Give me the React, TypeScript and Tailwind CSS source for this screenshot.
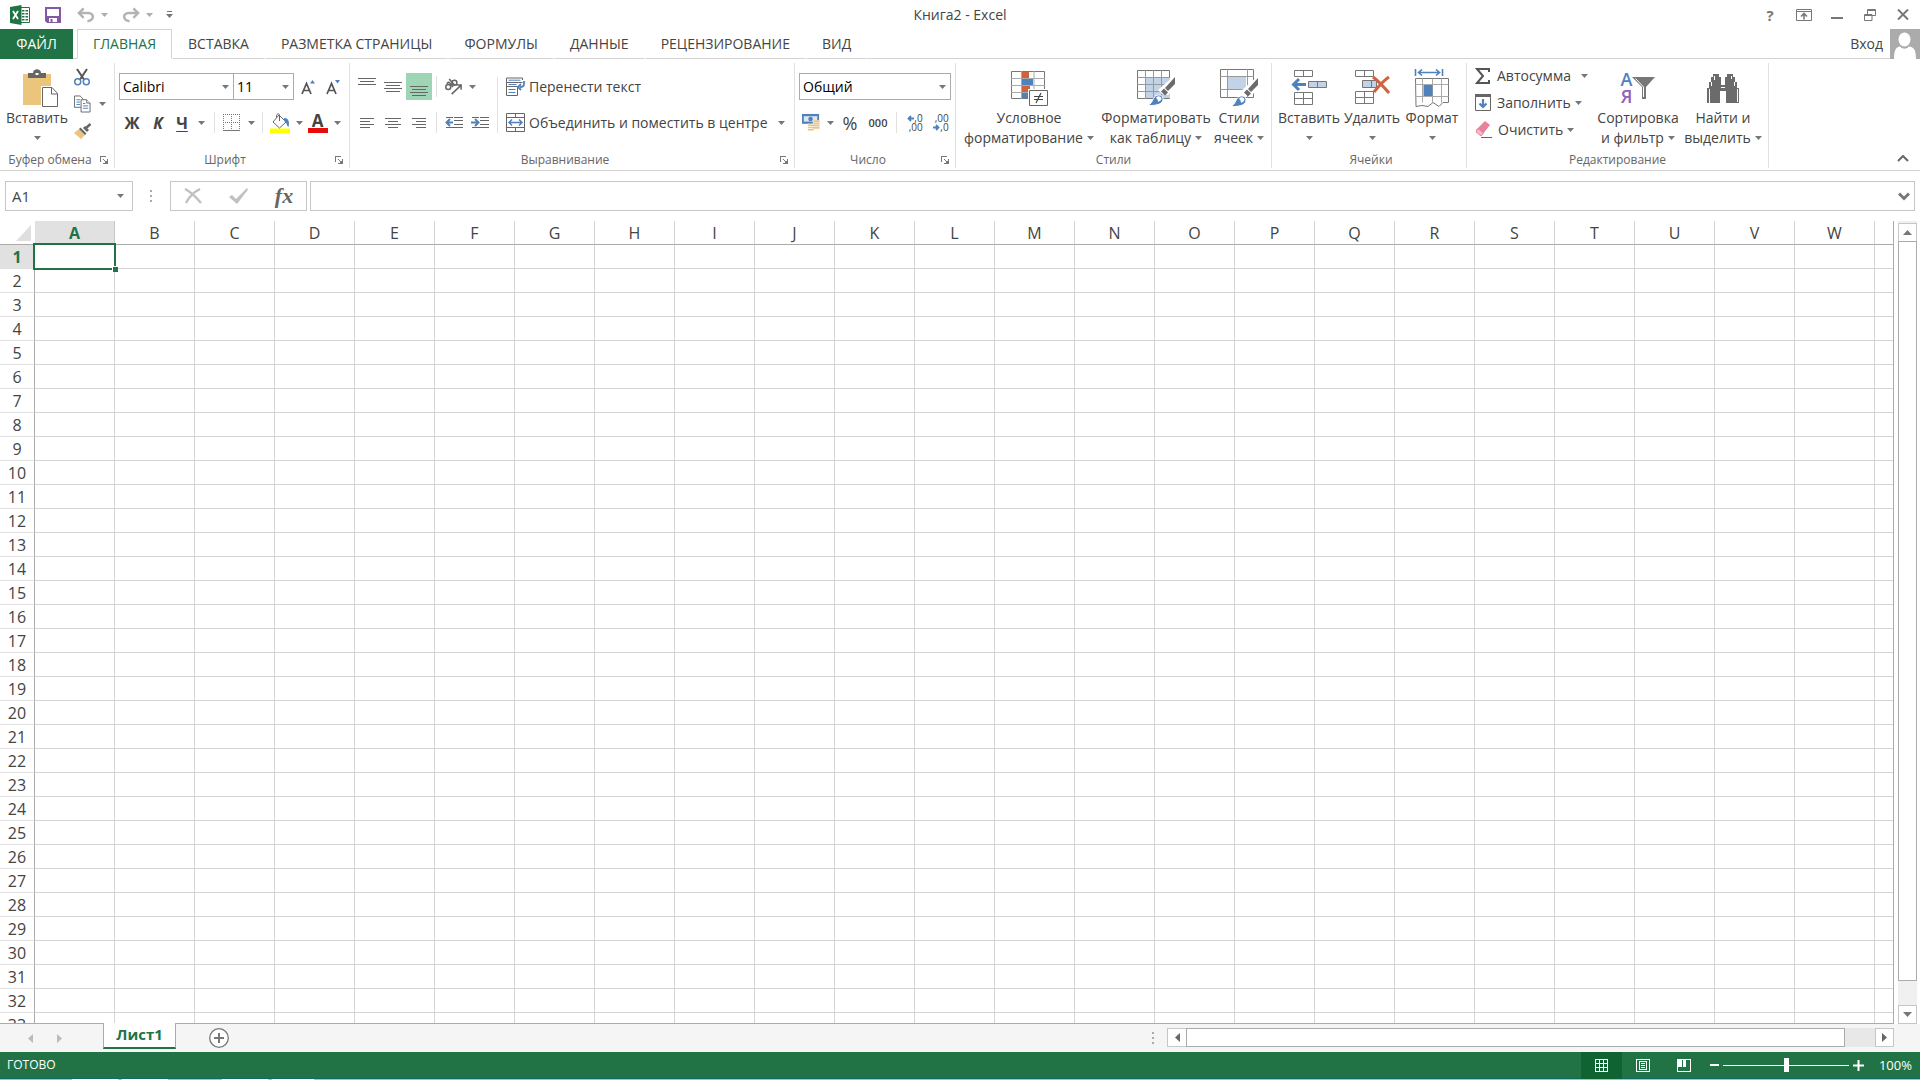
import React, { useState } from 'react'
import type { ReactNode } from 'react'

const TABS = ['ГЛАВНАЯ', 'ВСТАВКА', 'РАЗМЕТКА СТРАНИЦЫ', 'ФОРМУЛЫ', 'ДАННЫЕ', 'РЕЦЕНЗИРОВАНИЕ', 'ВИД']
const COLUMNS = 'ABCDEFGHIJKLMNOPQRSTUVWXYZ'.split('')
const ROWS = Array.from({ length: 40 }, (_, i) => i + 1)

export default function App() {
  const [tab, setTab] = useState('ГЛАВНАЯ')
  const [cell, setCell] = useState('A1')

  return (
    <div className="flex h-screen flex-col overflow-hidden bg-white font-['Open_Sans','Noto_Sans',sans-serif] text-[14px] leading-5 text-[#444]">
      <TitleBar />
      <TabRow active={tab} onSelect={setTab} />
      <Ribbon />
      <FormulaBar cell={cell} />
      <Sheet cell={cell} onSelect={setCell} />
      <SheetTabs />
      <StatusBar />
    </div>
  )
}

// ─── Shared bits ──────────────────────────────────────────────────────────────

function Caret({ className = '' }: { className?: string }) {
  return (
    <svg className={`shrink-0 ${className}`} width="7" height="4" viewBox="0 0 7 4" fill="#777">
      <path d="M0 0h7L3.500 4z" />
    </svg>
  )
}

function Sep({ className = 'h-[21px]' }: { className?: string }) {
  return <span className={`w-px shrink-0 bg-[#e1e1e1] ${className}`} />
}

interface IconButtonProps {
  label: string
  className?: string
  children: ReactNode
}

function IconButton({ label, className = 'w-[26px]', children }: IconButtonProps) {
  return (
    <button aria-label={label} title={label} className={`flex h-[27px] shrink-0 items-center justify-center ${className}`}>
      {children}
    </button>
  )
}

interface BigButtonProps {
  icon: ReactNode
  lines: string[]
  className: string
}

function BigButton({ icon, lines, className }: BigButtonProps) {
  return (
    <button className={`flex shrink-0 flex-col items-center pt-[5px] whitespace-nowrap ${className}`}>
      <span className="flex h-10 items-center">{icon}</span>
      <span>{lines[0]}</span>
      <span className="flex h-5 items-center gap-1">
        {lines[1]}
        <Caret />
      </span>
    </button>
  )
}

interface GroupProps {
  title: string
  className: string
  launcher?: boolean
  children: ReactNode
}

function Group({ title, className, launcher, children }: GroupProps) {
  return (
    <section className={`mt-1 mb-0.5 flex shrink-0 flex-col border-r border-[#e1e1e1] ${className}`}>
      <div className="flex flex-1">{children}</div>
      <div className="flex h-4 items-center text-[12px] leading-4 text-[#666]">
        <h2 className="flex-1 text-center whitespace-nowrap">{title}</h2>
        {launcher && (
          <button aria-label={`Параметры: ${title}`} className="mr-1.5">
            <svg width="8" height="8" viewBox="0 0 8 8" fill="none" stroke="#777" shapeRendering="crispEdges">
              <path d="M.5 6V.5H6" />
              <path d="M3 3l3 3M7.500 3v4.500H3" />
              <path d="M7 4v3H4z" fill="#777" stroke="none" />
            </svg>
          </button>
        )}
      </div>
    </section>
  )
}

function Lines({ rows }: { rows: number[][] }) {
  return (
    <svg width="18" height="18" viewBox="0 0 18 18" stroke="#666" shapeRendering="crispEdges">
      {rows.map(([x1, x2, y]) => (
        <path key={y} d={`M${x1} ${y + 0.5}H${x2}`} />
      ))}
    </svg>
  )
}

// ─── Title bar ────────────────────────────────────────────────────────────────

function TitleBar() {
  return (
    <header className="grid h-[29px] shrink-0 grid-cols-[1fr_auto_1fr] items-center">
      <div className="flex items-center pl-2.5">
        <svg width="20" height="20" viewBox="0 0 20 20">
          <path d="M11 2.500h8.500v15H11" fill="#fff" stroke="#217346" />
          <path d="M12 5h2.500v1.500H12zM15.500 5H18v1.500h-2.500zM12 8h2.500v1.500H12zM15.500 8H18v1.500h-2.500zM12 11h2.500v1.500H12zM15.500 11H18v1.500h-2.500zM12 14h2.500v1.500H12zM15.500 14H18v1.500h-2.500z" fill="#217346" />
          <path d="M0 2l11.500-2v20L0 18z" fill="#217346" />
          <path d="M3 6l5 8M8 6l-5 8" stroke="#fff" strokeWidth="1.800" />
        </svg>
        <IconButton label="Сохранить" className="ml-[15px] w-4">
          <svg width="16" height="16" viewBox="0 0 16 16">
            <path d="M1 1h14v14H2.500L1 13.500z" fill="#fff" stroke="#8558a5" strokeWidth="2" />
            <path d="M1 9h14v6H1z" fill="#8558a5" />
            <path d="M4 11h8v4H4z" fill="#fff" />
            <path d="M5.500 12h2v3h-2z" fill="#8558a5" />
          </svg>
        </IconButton>
        <IconButton label="Отменить" className="ml-4 w-[31px] gap-1.5">
          <svg width="19" height="16" viewBox="0 0 19 16" fill="none" stroke="#b3b3b3" strokeWidth="2.600">
            <path d="M2 6h10c7 0 6 8-1 8.500" />
            <path d="M7 1L2 6l5 5" />
          </svg>
          <Caret className="opacity-60" />
        </IconButton>
        <IconButton label="Вернуть" className="ml-3.5 w-[31px] gap-1.5">
          <svg width="19" height="16" viewBox="0 0 19 16" fill="none" stroke="#b3b3b3" strokeWidth="2.600">
            <path d="M17 6H7C0 6 1 14 8 14.500" />
            <path d="M12 1l5 5-5 5" />
          </svg>
          <Caret className="opacity-60" />
        </IconButton>
        <IconButton label="Настройка панели быстрого доступа" className="ml-3 w-2">
          <svg width="7" height="7" viewBox="0 0 7 7" fill="#777">
            <path d="M1 0h5v1H1zM0 3h7L3.500 7z" />
          </svg>
        </IconButton>
      </div>
      <h1>Книга2 - Excel</h1>
      <div className="flex items-center justify-end pr-[11px] text-[#777]">
        <IconButton label="Справка" className="w-[34px] text-[15px] font-bold">?</IconButton>
        <IconButton label="Параметры отображения ленты" className="w-[33px]">
          <svg width="16" height="12" viewBox="0 0 16 12" fill="none" stroke="#777">
            <path d="M.5.5h15v11H.5zM1 2.500h14" />
            <path d="M8 10.500V5M5 7.500L8 4.500l3 3" strokeWidth="1.600" />
          </svg>
        </IconButton>
        <IconButton label="Свернуть" className="w-[33px]">
          <svg width="12" height="8" viewBox="0 0 12 8" fill="#777">
            <path d="M0 6h12v2H0z" />
          </svg>
        </IconButton>
        <IconButton label="Восстановить" className="w-[33px]">
          <svg width="12" height="12" viewBox="0 0 12 12" fill="none" stroke="#777">
            <path d="M3.500 5V.5h8v6H8M3.500 1.500h8" />
            <path d="M.5 5.500h7.500v6H.5zM.5 6.500H8" />
          </svg>
        </IconButton>
        <IconButton label="Закрыть" className="ml-2.5 w-[13px]">
          <svg width="12" height="11" viewBox="0 0 12 11" stroke="#777" strokeWidth="2">
            <path d="M1 .5l10 10M11 .5l-10 10" />
          </svg>
        </IconButton>
      </div>
    </header>
  )
}

// ─── Tabs ─────────────────────────────────────────────────────────────────────

interface TabRowProps {
  active: string
  onSelect: (tab: string) => void
}

function TabRow({ active, onSelect }: TabRowProps) {
  return (
    <nav className="flex h-[30px] shrink-0">
      <button className="w-[73px] bg-[#217346] text-white">ФАЙЛ</button>
      <span className="w-1 border-b border-[#d4d4d4]" />
      {TABS.map(t => (
        <button
          key={t}
          onClick={() => onSelect(t)}
          className={[
            'border px-[15px] whitespace-nowrap',
            t === active
              ? 'border-[#d4d4d4] border-b-white text-[#217346]'
              : 'border-transparent border-b-[#d4d4d4]',
          ].join(' ')}
        >
          {t}
        </button>
      ))}
      <div className="flex flex-1 items-center justify-end border-b border-[#d4d4d4] pr-[7px]">
        <a href="#login">Вход</a>
      </div>
      <svg width="30" height="30" viewBox="0 0 30 30" className="bg-[#ababab]">
        <ellipse cx="14.500" cy="10.500" rx="6" ry="7" fill="#fff" />
        <path d="M4 30c0-9 2-12 6-12.500 3 3 6 3 9 0 5 .5 7 3.500 7 12.500z" fill="#fff" />
      </svg>
    </nav>
  )
}

// ─── Ribbon ───────────────────────────────────────────────────────────────────

function Ribbon() {
  return (
    <div className="flex h-28 shrink-0 border-b border-[#d4d4d4]">
      <ClipboardGroup />
      <FontGroup />
      <AlignmentGroup />
      <NumberGroup />
      <StylesGroup />
      <CellsGroup />
      <EditingGroup />
      <button aria-label="Свернуть ленту" className="mt-auto mr-[11px] mb-2 ml-auto">
        <svg width="12" height="7" viewBox="0 0 12 7" fill="none" stroke="#666" strokeWidth="2">
          <path d="M1 6l5-5 5 5" />
        </svg>
      </button>
    </div>
  )
}

function ClipboardGroup() {
  return (
    <Group title="Буфер обмена" className="w-[115px]" launcher>
      <BigButton
        className="w-[74px]"
        lines={['Вставить', '']}
        icon={
          <svg className="ml-2" width="36" height="39" viewBox="0 0 36 39">
            <path d="M0 5h28v31H0z" fill="#ecc57d" />
            <path d="M5 4h5c0-5 8-5 8 0h5v5H5z" fill="#666" />
            <path d="M12.500 4h3v2h-3z" fill="#fff" />
            <path d="M18 17h18v22H18z" fill="#fff" />
            <path d="M19.500 18.500h9.500l5.500 6v13h-15z" fill="#fff" stroke="#666" />
            <path d="M28.500 18.500v6.500h6" fill="none" stroke="#666" />
          </svg>
        }
      />
      <div className="flex flex-col">
        <IconButton label="Вырезать" className="w-4">
          <svg width="16" height="18" viewBox="0 0 16 18" fill="none">
            <path d="M3 1l7 10.500M13 1L6 11.500" stroke="#555" strokeWidth="2" />
            <circle cx="3.700" cy="13.700" r="3" stroke="#4f81bd" strokeWidth="1.500" />
            <circle cx="12.300" cy="13.700" r="3" stroke="#4f81bd" strokeWidth="1.500" />
          </svg>
        </IconButton>
        <IconButton label="Копировать" className="w-8 justify-start gap-2">
          <svg width="18" height="18" viewBox="0 0 18 18" fill="#fff" stroke="#666">
            <path d="M.5.5h6l3 3v9h-9z" />
            <path d="M2.500 4.500h4M2.500 7h4M2.500 9.500h4" stroke="#4f81bd" />
            <path d="M7.500 4.500h6l3.500 3.500v9.500H7.500z" />
            <path d="M13.500 4.500V8H17" />
            <path d="M9.500 8.500h2.500M9.500 11h5.500M9.500 13.500h5.500" stroke="#4f81bd" />
          </svg>
          <Caret />
        </IconButton>
        <IconButton label="Формат по образцу" className="w-[18px]">
          <svg width="18" height="16" viewBox="0 0 18 16">
            <path d="M5 6l6 6-4 4-7-6z" fill="#ecc57d" />
            <path d="M6.500 4.500l6 6-1.500 1.500-6-6zM9 5l2-2 4 4-2 2z" fill="#666" />
            <path d="M12 5l4.500-4" stroke="#666" strokeWidth="2.500" />
          </svg>
        </IconButton>
      </div>
    </Group>
  )
}

function FontGroup() {
  return (
    <Group title="Шрифт" className="w-[235px]" launcher>
      <div className="flex flex-col gap-[9px] pt-2.5">
        <div className="flex pl-1">
          <Combo label="Шрифт" className="w-[115px]" options={['Calibri', 'Arial']} />
          <Combo label="Размер шрифта" className="-ml-px w-[61px]" options={['11', '12', '14']} />
          <IconButton label="Увеличить размер шрифта" className="ml-px w-[26px]">
            <SizeGlyph d="M9 4.500h5L11.500 1z" />
          </IconButton>
          <IconButton label="Уменьшить размер шрифта" className="w-6">
            <SizeGlyph d="M9 1h5l-2.500 3.500z" />
          </IconButton>
        </div>
        <div className="flex items-center pl-1">
          <IconButton label="Полужирный"><b className="text-[16px]">Ж</b></IconButton>
          <IconButton label="Курсив"><b className="text-[16px] italic">К</b></IconButton>
          <IconButton label="Подчеркнутый" className="w-[39px] gap-2.5">
            <b className="text-[16px] underline underline-offset-2">Ч</b>
            <Caret />
          </IconButton>
          <Sep className="mx-1 h-[21px]" />
          <IconButton label="Границы" className="w-[39px] gap-2">
            <svg width="17" height="17" viewBox="0 0 17 17" fill="none" stroke="#777" strokeDasharray="1 1" shapeRendering="crispEdges">
              <path d="M0 .5h17M0 8.500h17M.5 0v17M8.500 0v17M16.500 0v17" />
              <path d="M0 16.500h17" strokeDasharray="none" />
            </svg>
            <Caret />
          </IconButton>
          <Sep className="mx-1 h-[21px]" />
          <IconButton label="Цвет заливки" className="w-[38px] gap-1.5">
            <svg width="20" height="20" viewBox="0 0 20 20">
              <path d="M0 15.500h20V20H0z" fill="#ffff00" />
              <path d="M9 2l7 7-6.500 6L3 9z" fill="#fff" stroke="#666" />
              <path d="M9.500 8V2.500c0-3-3.500-2-3 2" fill="none" stroke="#666" />
              <path d="M14 5c4 0 6 3 4.500 9C16.500 13 17 9 14 8z" fill="#4f81bd" />
            </svg>
            <Caret />
          </IconButton>
          <IconButton label="Цвет текста" className="w-[38px] gap-1.5">
            <span className="w-5 border-b-[5px] border-[#e60c0c] text-center text-[17px] leading-[15px] font-bold">А</span>
            <Caret />
          </IconButton>
        </div>
      </div>
    </Group>
  )
}

function SizeGlyph({ d }: { d: string }) {
  return (
    <svg width="14" height="16" viewBox="0 0 14 16">
      <path d="M1 15L5.500 4.500 10 15M2.500 11.500h6" fill="none" stroke="#555" strokeWidth="1.700" />
      <path d={d} fill="#4f81bd" />
    </svg>
  )
}

interface ComboProps {
  label: string
  className: string
  options: string[]
}

function Combo({ label, className, options }: ComboProps) {
  return (
    <label className={`relative flex h-[27px] shrink-0 items-center border border-[#ababab] bg-white ${className}`}>
      <select aria-label={label} className="h-full w-full appearance-none pl-[3px] text-black outline-none">
        {options.map(o => (
          <option key={o}>{o}</option>
        ))}
      </select>
      <Caret className="pointer-events-none absolute right-1" />
    </label>
  )
}

function AlignmentGroup() {
  return (
    <Group title="Выравнивание" className="w-[445px]" launcher>
      <div className="flex flex-col gap-[9px] pt-2.5 pl-1">
        <div className="flex items-center">
          <IconButton label="По верхнему краю">
            <Lines rows={[[0, 18, 0], [2, 16, 3], [0, 18, 6]]} />
          </IconButton>
          <IconButton label="По середине">
            <Lines rows={[[0, 18, 4], [2, 16, 7], [0, 18, 10], [2, 16, 13]]} />
          </IconButton>
          <IconButton label="По нижнему краю" className="w-[26px] bg-[#9fd5b7]">
            <Lines rows={[[0, 18, 8], [2, 16, 11], [0, 18, 14], [2, 16, 17]]} />
          </IconButton>
          <Sep className="ml-1 h-[21px]" />
          <IconButton label="Ориентация" className="ml-[7px] w-8 gap-1.5">
            <svg width="20" height="20" viewBox="0 0 20 20" fill="none" stroke="#666" strokeWidth="1.600">
              <circle cx="4.500" cy="10" r="2.600" />
              <path d="M3 6.500c1-2 2.500-1.500 3.500-.5l3 4" />
              <path d="M5.500 1.500l6 7" />
              <circle cx="11" cy="5.500" r="2.600" />
              <path d="M8 17.500l9.500-9M13 8h5v5" />
            </svg>
            <Caret />
          </IconButton>
        </div>
        <div className="flex items-center">
          <IconButton label="По левому краю">
            <Lines rows={[[2, 16, 4], [2, 12, 7], [2, 16, 10], [2, 12, 13]]} />
          </IconButton>
          <IconButton label="По центру">
            <Lines rows={[[1, 17, 4], [4, 14, 7], [1, 17, 10], [4, 14, 13]]} />
          </IconButton>
          <IconButton label="По правому краю">
            <Lines rows={[[2, 16, 4], [6, 16, 7], [2, 16, 10], [6, 16, 13]]} />
          </IconButton>
          <Sep className="ml-1 h-[21px]" />
          <IconButton label="Уменьшить отступ" className="ml-1 w-[26px]">
            <IndentGlyph arrow="M8 5.500H2M5 2L1.500 5.500 5 9" />
          </IconButton>
          <IconButton label="Увеличить отступ">
            <IndentGlyph arrow="M0 5.500h6M4 2l3.500 3.500L4 9" />
          </IconButton>
        </div>
      </div>
      <Sep className="mt-3.5 ml-1 h-14" />
      <div className="flex flex-col gap-[9px] pt-2.5 pl-2">
        <button className="flex h-[27px] items-center gap-1">
          <svg width="19" height="19" viewBox="0 0 19 19" fill="none" stroke="#666">
            <path d="M.5 1h16M.5 5.500h16M.5 1v17.500h11V9.500M.5 9.500h11M16.500 1v2" />
            <path d="M2.500 3.200h12M2.500 7.500h8M2.500 12.500h7M2.500 15.500h7" stroke="#4f81bd" />
            <path d="M18 4v3c0 2-1 3-4 3M15 7l-3 3 3 3" stroke="#4f81bd" strokeWidth="1.800" />
          </svg>
          Перенести текст
        </button>
        <button className="flex h-[27px] items-center gap-1">
          <svg width="19" height="19" viewBox="0 0 19 19" fill="none" stroke="#666">
            <path d="M.5.5h18v18H.5zM.5 4.500h18M.5 14.500h18M9.500.5v4M9.500 14.500v4" />
            <path d="M3 9.500h13M6 6.500l-3 3 3 3M13 6.500l3 3-3 3" stroke="#4f81bd" strokeWidth="1.500" />
          </svg>
          Объединить и поместить в центре
          <Caret className="ml-1.5" />
        </button>
      </div>
    </Group>
  )
}

function IndentGlyph({ arrow }: { arrow: string }) {
  return (
    <svg width="18" height="11" viewBox="0 0 18 11" fill="none">
      <path d="M9 .5h9M9 3.500h9M9 7.500h9M1 10.500h17M1 .5h7" stroke="#666" />
      <path d="M0 2h9v7H0z" fill="#fff" />
      <path d={arrow} stroke="#4f81bd" strokeWidth="2" />
    </svg>
  )
}

function NumberGroup() {
  return (
    <Group title="Число" className="w-[161px]" launcher>
      <div className="flex flex-col gap-[9px] pt-2.5 pl-1">
        <Combo label="Числовой формат" className="w-[152px]" options={['Общий', 'Числовой', 'Денежный']} />
        <div className="flex items-center pl-[3px]">
          <IconButton label="Финансовый числовой формат" className="w-8 gap-[7px]">
            <svg width="20" height="19" viewBox="0 0 20 19">
              <path d="M0 0h19v11H0z" fill="#4f81bd" />
              <path d="M2 2.500h15v6H2z" fill="#dbe6f2" />
              <circle cx="9.500" cy="5.500" r="2.500" fill="#4f81bd" />
              <path d="M12 7h8v5.500h-8zM6 11h7v8H6z" fill="#fff" />
              <path d="M12.500 8h7M12.500 10.500h7M12.500 13h7M12.500 15.500h7M6.500 12.500H13M6.500 15H13M6.500 17.500H13" stroke="#ecc57d" strokeWidth="1.800" />
            </svg>
            <Caret />
          </IconButton>
          <IconButton label="Процентный формат" className="ml-1 w-6 text-[18px]">%</IconButton>
          <IconButton label="Формат с разделителями" className="ml-1.5 w-5 text-[11px] font-semibold">000</IconButton>
          <Sep className="mx-2 h-[21px]" />
          <IconButton label="Увеличить разрядность" className="w-5">
            <span className="flex flex-col text-[10px] leading-[9px]">
              <span className="flex items-center">
                <DecimalArrow d="M7 3.500H1.500M4 1L1.500 3.500 4 6" />
                ,0
              </span>
              <span className="text-right">,00</span>
            </span>
          </IconButton>
          <IconButton label="Уменьшить разрядность" className="ml-1.5 w-5">
            <span className="flex flex-col text-[10px] leading-[9px]">
              <span className="text-right">,00</span>
              <span className="flex items-center">
                <DecimalArrow d="M0 3.500h5.500M3 1l2.500 2.500L3 6" />
                ,0
              </span>
            </span>
          </IconButton>
        </div>
      </div>
    </Group>
  )
}

function DecimalArrow({ d }: { d: string }) {
  return (
    <svg width="7" height="7" viewBox="0 0 7 7" fill="none" stroke="#4f81bd" strokeWidth="1.800">
      <path d={d} />
    </svg>
  )
}

function Brush() {
  return (
    <>
      <path d="M38 5v13l-7 7-6-1-4-4z" fill="#fff" />
      <path d="M38 7v7l-7 7-3-3z" fill="#6b6b6b" />
      <path d="M27 18.500l4 4-3 3-4-4z" fill="#6b6b6b" />
      <path d="M10 35.500c4-1 5-4 6.500-7 2-4.500 9-5 9.500 0 .5 5-5 7.500-16 7z" fill="#4f81bd" stroke="#fff" />
      <path d="M19 28c1-2.500 5-2.500 5.500.5 0 2-2 2.500-3.500 3.500 0-2-.5-3-2-4z" fill="#fff" />
    </>
  )
}

function StylesGroup() {
  return (
    <Group title="Стили" className="w-[316px]">
      <BigButton
        className="w-[146px]"
        lines={['Условное', 'форматирование']}
        icon={
          <svg width="37" height="35" viewBox="0 0 37 35">
            <path d="M.5.500h33v27H.5z" fill="#fff" stroke="#777" />
            <path d="M10.500 0v28M23 0v28M0 7.500h34M0 14.500h34M0 21.500h34" stroke="#aaa" />
            <path d="M11 1h7v6h-7zM11 15h8v6h-8z" fill="#d0623f" />
            <path d="M11 8h11v6H11zM11 22h6v5h-6z" fill="#4f81bd" />
            <path d="M17 18h20v17H17z" fill="#fff" />
            <path d="M18.500 19.500h18v15h-18z" fill="#fff" stroke="#666" />
            <path d="M23 25.500h9M23 28.500h9M30 22l-5 10" stroke="#444" strokeWidth="1.200" />
          </svg>
        }
      />
      <BigButton
        className="w-[108px]"
        lines={['Форматировать', 'как таблицу']}
        icon={
          <svg width="38" height="36" viewBox="0 0 38 36">
            <path d="M.5.500h32v28H.5z" fill="#fff" stroke="#777" />
            <path d="M9 8h24v20H9z" fill="#c2d3e8" />
            <path d="M8.500 0v29M16.500 0v29M24.500 0v29M0 7.500h33M0 14.500h33M0 21.500h33" stroke="#999" />
            <Brush />
          </svg>
        }
      />
      <BigButton
        className="w-[58px]"
        lines={['Стили', 'ячеек']}
        icon={
          <svg width="38" height="38" viewBox="0 -2 38 38">
            <path d="M.5-1.500h33v28H.5z" fill="#fff" stroke="#777" />
            <path d="M7.500-2v29M27.500-2v29M0 5.500h34M0 18.500h34" stroke="#999" />
            <path d="M8 6h18v12H8z" fill="#c2d3e8" />
            <Brush />
          </svg>
        }
      />
    </Group>
  )
}

function CellsGroup() {
  return (
    <Group title="Ячейки" className="w-[195px] pl-1">
      <BigButton
        className="w-[66px]"
        lines={['Вставить', '']}
        icon={
          <svg width="36" height="36" viewBox="0 0 36 36" fill="#fff" stroke="#777">
            <path d="M3.500.500h18v6h-18zM12.500.5v6M3.500 22.500h18v12h-18zM3.500 28.500h18M12.500 22.500v12" />
            <path d="M17.500 11.500h18v6h-18zM26.500 11.500v6" fill="#c2d3e8" />
            <path d="M15 14.500H3M8 9l-5.500 5.500L8 20" fill="none" stroke="#4f81bd" strokeWidth="3" />
          </svg>
        }
      />
      <BigButton
        className="w-[60px]"
        lines={['Удалить', '']}
        icon={
          <svg width="36" height="36" viewBox="0 0 36 36" fill="#fff" stroke="#777">
            <path d="M1.500.500h18v6h-18zM10.500.5v6M1.500 21.500h18v12h-18zM1.500 27.500h18M10.500 21.500v12" />
            <path d="M8.500 10.500h14v7h-14zM17.500 10.500v7" fill="#c2d3e8" />
            <path d="M19 7c4 3 10 9 16 16M35 7c-6 4-11 10-15 15" fill="none" stroke="#d0623f" strokeWidth="3" />
          </svg>
        }
      />
      <BigButton
        className="w-[60px]"
        lines={['Формат', '']}
        icon={
          <svg width="36" height="38" viewBox="0 0 36 38" fill="#fff" stroke="#777">
            <path d="M1.500 9.500h33v24H29l-4 4-6-4-5 4-6-1-6 1z" />
            <path d="M8.500 9.500v24M18.500 9.500v24M27.500 9.500v24M1.500 15.500h33M1.500 27.500h33" stroke="#aaa" />
            <path d="M9.500 16h9v11h-9z" fill="#4f81bd" stroke="none" />
            <path d="M1.500 0v7M28.500 0v7M4 3.500h22M8 .5l-3.500 3L8 6.500M22 .5l3.500 3L22 6.500" fill="none" stroke="#4f81bd" strokeWidth="1.600" />
          </svg>
        }
      />
    </Group>
  )
}

function EditingGroup() {
  return (
    <Group title="Редактирование" className="w-[302px]">
      <div className="flex w-[126px] shrink-0 flex-col pl-2">
        <button className="flex h-[26px] items-center gap-1.5 whitespace-nowrap">
          <svg width="16" height="16" viewBox="0 0 16 16" fill="none" stroke="#555" strokeWidth="2">
            <path d="M14 4V1H2l6 7-6 7h12v-3" />
          </svg>
          Автосумма
          <Caret className="ml-1" />
        </button>
        <button className="flex h-[27px] items-center gap-1.5 whitespace-nowrap">
          <svg width="16" height="17" viewBox="0 0 16 17" fill="none">
            <path d="M.5.500h15v16H.5z" fill="#fff" stroke="#666" />
            <path d="M0 1.500h16" stroke="#666" strokeWidth="3" />
            <path d="M8 5v8M4.500 9.500L8 13l3.500-3.500" stroke="#4f81bd" strokeWidth="2.200" />
          </svg>
          Заполнить
          <Caret className="-ml-0.5" />
        </button>
        <button className="flex h-[27px] items-center gap-1.5 whitespace-nowrap">
          <svg width="17" height="17" viewBox="0 0 17 17">
            <path d="M10 0l5 4-8 10-6-5z" fill="#e8829a" />
            <path d="M3 7.500l5.500 4.500L6 15 1 11z" fill="#f3bcc8" stroke="#e8829a" />
            <path d="M6 16.500h11" stroke="#666" />
          </svg>
          Очистить
          <Caret className="-ml-0.5" />
        </button>
      </div>
      <BigButton
        className="w-[90px]"
        lines={['Сортировка', 'и фильтр']}
        icon={
          <span className="flex items-center">
            <span className="flex flex-col text-[18px] leading-[17px] font-semibold">
              <span className="text-[#4f81bd]">А</span>
              <span className="text-[#9560b5]">Я</span>
            </span>
            <svg width="23" height="22" viewBox="0 0 23 22">
              <path d="M0 0h23L14 10v12h-4V10z" fill="#777" />
              <path d="M3.500 1.500l8 8.500v10" fill="none" stroke="#fff" />
            </svg>
          </span>
        }
      />
      <BigButton
        className="w-20"
        lines={['Найти и', 'выделить']}
        icon={
          <svg width="34" height="31" viewBox="0 0 34 31" fill="#6b6b6b">
            <path d="M5 4h2V1h6v3h2v8h4V4h2V1h6v3h2v5h2v6h2v15H20V18h-6v12H1V15h2V9h2z" />
            <path d="M3.500 16v14M8.500 3v4M5.500 9v4M25.500 3v3M28.500 9v4M31.500 16v13M15 14.500h4" fill="none" stroke="#fff" />
          </svg>
        }
      />
    </Group>
  )
}

// ─── Formula bar ──────────────────────────────────────────────────────────────

function FormulaBar({ cell }: { cell: string }) {
  return (
    <div className="flex h-[50px] shrink-0 items-start px-[5px] pt-2.5">
      <label className="relative flex h-[30px] w-32 shrink-0 items-center border border-[#c6c6c6]">
        <input aria-label="Имя" value={cell} readOnly className="w-full pl-1.5 text-[15px] outline-none" />
        <Caret className="absolute right-2" />
      </label>
      <svg className="mx-[17px] mt-[9px] shrink-0" width="3" height="12" viewBox="0 0 3 12" fill="#aaa">
        <path d="M0 0h2v2H0zM0 5h2v2H0zM0 10h2v2H0z" />
      </svg>
      <div className="flex h-[30px] w-[137px] shrink-0 items-center justify-between border border-[#c6c6c6] pr-2 pl-2">
        <IconButton label="Отмена" className="w-7">
          <svg width="18" height="16" viewBox="0 0 18 16" fill="none" stroke="#c0c0c0" strokeWidth="2.400">
            <path d="M1 1c6 3 11 8 16 14M16 1C10 4 5 9 2 15" />
          </svg>
        </IconButton>
        <IconButton label="Ввод" className="w-7">
          <svg width="20" height="16" viewBox="0 0 20 16" fill="#c0c0c0">
            <path d="M0 9l3-2 4 4L18 0l1 1.500L8 16z" />
          </svg>
        </IconButton>
        <IconButton label="Вставить функцию" className="w-7">
          <span className="font-['Liberation_Serif',serif] text-[22px] leading-6 font-bold italic text-[#666]">fx</span>
        </IconButton>
      </div>
      <label className="ml-[3px] flex h-[30px] flex-1 items-center border border-[#c6c6c6]">
        <input aria-label="Строка формул" className="h-full flex-1 px-2 outline-none" />
        <button aria-label="Развернуть строку формул" className="mr-1">
          <svg width="12" height="9" viewBox="0 0 12 9" fill="none" stroke="#777" strokeWidth="3">
            <path d="M1 1.500l5 5 5-5" />
          </svg>
        </button>
      </label>
    </div>
  )
}

// ─── Sheet ────────────────────────────────────────────────────────────────────

interface SheetProps {
  cell: string
  onSelect: (cell: string) => void
}

function Sheet({ cell, onSelect }: SheetProps) {
  return (
    <div className="flex min-h-0 flex-1">
      <div className="min-w-0 flex-1 overflow-hidden border-r border-b border-[#ababab]">
        <table className="border-separate border-spacing-0 text-[16px] leading-5">
          <thead>
            <tr>
              <th className="h-6 min-w-[35px] border-b border-[#ababab] p-0">
                <svg className="ml-4" width="15" height="16" viewBox="0 0 15 16" fill="#dfdfdf">
                  <path d="M15 0v16H0z" />
                </svg>
              </th>
              {COLUMNS.map(c => (
                <th
                  key={c}
                  className={[
                    'h-6 min-w-20 border-r border-b p-0',
                    cell.replace(/\d/g, '') === c
                      ? 'border-r-[#c6c6c6] border-b-[#217346] bg-[#e1e1e1] font-bold text-[#217346]'
                      : 'border-r-[#d4d4d4] border-b-[#ababab] font-normal',
                  ].join(' ')}
                >
                  {c}
                </th>
              ))}
            </tr>
          </thead>
          <tbody>
            {ROWS.map(r => (
              <tr key={r}>
                <th
                  className={[
                    'h-6 border-r border-b border-r-[#ababab] border-b-[#e1e1e1] p-0',
                    cell.replace(/\D/g, '') === String(r)
                      ? 'bg-[#e1e1e1] font-bold text-[#217346]'
                      : 'font-normal',
                  ].join(' ')}
                >
                  {r}
                </th>
                {COLUMNS.map(c => (
                  <td
                    key={c}
                    onClick={() => onSelect(c + r)}
                    className="relative h-6 border-r border-b border-[#d4d4d4] p-0"
                  >
                    {cell === c + r && (
                      <span className="absolute -inset-0.5 z-10 border-2 border-[#217346]">
                        <span className="absolute -right-1 -bottom-1 h-1.5 w-1.5 border-t border-l border-white bg-[#217346]" />
                      </span>
                    )}
                  </td>
                ))}
              </tr>
            ))}
          </tbody>
        </table>
      </div>
      <div className="mr-[3px] ml-1 flex w-[19px] shrink-0 flex-col bg-[#f0f0f0] pt-0.5">
        <ScrollArrow label="Вверх" d="M0 5h9L4.500 0z" />
        <div className="-mt-px h-[94%] border border-[#ababab] bg-white" />
        <div className="h-[3%]" />
        <ScrollArrow label="Вниз" d="M0 0h9L4.500 5z" />
      </div>
    </div>
  )
}

function ScrollArrow({ label, d }: { label: string; d: string }) {
  return (
    <button aria-label={label} className="flex h-[19px] shrink-0 items-center justify-center border border-[#c6c6c6] bg-white">
      <svg width="9" height="5" viewBox="0 0 9 5" fill="#777">
        <path d={d} />
      </svg>
    </button>
  )
}

function SheetTabs() {
  return (
    <div className="flex h-7 shrink-0 items-start bg-[#f5f5f5]">
      <button aria-label="Предыдущий лист" className="mt-2.5 ml-7">
        <svg width="5" height="9" viewBox="0 0 5 9" fill="#bbb">
          <path d="M5 0v9L0 4.500z" />
        </svg>
      </button>
      <button aria-label="Следующий лист" className="mt-2.5 ml-6">
        <svg width="5" height="9" viewBox="0 0 5 9" fill="#bbb">
          <path d="M0 0v9l5-4.500z" />
        </svg>
      </button>
      <button className="-mt-px ml-[41px] h-[26px] w-[73px] border-r border-b-2 border-l border-r-[#ababab] border-b-[#217346] border-l-[#ababab] bg-white pb-0.5 text-[15px] font-bold text-[#217346]">
        Лист1
      </button>
      <button aria-label="Новый лист" className="mt-1 ml-[33px]">
        <svg width="20" height="20" viewBox="0 0 20 20" fill="#fff" stroke="#777">
          <circle cx="10" cy="10" r="9.300" strokeWidth="1.300" />
          <path d="M10 5v10M5 10h10" strokeWidth="2" />
        </svg>
      </button>
      <div className="ml-auto flex h-full w-2/5 items-start pt-1">
        <svg className="mt-1 mr-3 shrink-0" width="3" height="12" viewBox="0 0 3 12" fill="#aaa">
          <path d="M0 0h2v2H0zM0 5h2v2H0zM0 10h2v2H0z" />
        </svg>
        <div className="mr-[26px] flex h-[19px] flex-1 bg-[#e8e8e8]">
          <button aria-label="Влево" className="flex w-5 items-center justify-center border border-[#c6c6c6] bg-white">
            <svg width="5" height="9" viewBox="0 0 5 9" fill="#666">
              <path d="M5 0v9L0 4.500z" />
            </svg>
          </button>
          <div className="-ml-px mr-[30px] flex-1 border border-[#ababab] bg-white" />
          <button aria-label="Вправо" className="flex w-[19px] items-center justify-center border border-[#c6c6c6] bg-white">
            <svg width="5" height="9" viewBox="0 0 5 9" fill="#666">
              <path d="M0 0v9l5-4.500z" />
            </svg>
          </button>
        </div>
      </div>
    </div>
  )
}

// ─── Status bar ───────────────────────────────────────────────────────────────

function StatusBar() {
  const [zoom, setZoom] = useState(100)

  return (
    <footer className="shrink-0">
      <div className="flex h-[26px] items-center bg-[#217346] text-[12px] text-white">
        <span className="flex-1 pl-[7px]">ГОТОВО</span>
        <IconButton label="Обычный" className="w-[41px] bg-[#0f6332]">
          <svg width="13" height="13" viewBox="0 0 13 13" fill="none" stroke="#fff" shapeRendering="crispEdges">
            <path d="M.5.500h12v12H.5zM4.500 0v13M8.500 0v13M0 4.500h13M0 8.500h13" />
          </svg>
        </IconButton>
        <IconButton label="Разметка страницы" className="w-[41px]">
          <svg width="14" height="13" viewBox="0 0 14 13" fill="none" stroke="#fff" shapeRendering="crispEdges">
            <path d="M.5.500h13v12H.5zM3.500 2.500h7v8h-7zM5 4.500h4M5 6.500h4M5 8.500h4" />
          </svg>
        </IconButton>
        <IconButton label="Страничный" className="w-[41px]">
          <svg width="14" height="13" viewBox="0 0 14 13" fill="none" stroke="#fff" shapeRendering="crispEdges">
            <path d="M.5.500h13v12H.5z" />
            <path d="M1 1h4v7H1zM6 1h3v7H6z" fill="#fff" stroke="none" />
          </svg>
        </IconButton>
        <button aria-label="Уменьшить" onClick={() => setZoom(z => Math.max(10, z - 10))} className="ml-1.5 h-0.5 w-[9px] bg-white" />
        <input
          type="range"
          aria-label="Масштаб"
          min={0}
          max={200}
          value={zoom}
          onChange={e => setZoom(Number(e.target.value))}
          className="mx-1 h-3.5 w-[126px] appearance-none bg-[linear-gradient(white,white)] bg-[length:100%_1px] bg-center bg-no-repeat [&::-webkit-slider-thumb]:h-3.5 [&::-webkit-slider-thumb]:w-[5px] [&::-webkit-slider-thumb]:appearance-none [&::-webkit-slider-thumb]:bg-white"
        />
        <button aria-label="Увеличить" onClick={() => setZoom(z => Math.min(200, z + 10))}>
          <svg width="11" height="11" viewBox="0 0 11 11" stroke="#fff" strokeWidth="2">
            <path d="M5.500 0v11M0 5.500h11" />
          </svg>
        </button>
        <span className="w-14 pr-2 text-right text-[13px]">{zoom}%</span>
      </div>
      <div className="flex h-0.5 border-t border-[#0d6b63] bg-[#5fe0e0] pl-[72px]">
        <span className="w-[46px] bg-white" />
        <span className="ml-1 w-[46px] bg-white" />
        <span className="ml-[54px] w-[46px] bg-white" />
        <span className="ml-1 w-[42px] bg-white" />
      </div>
    </footer>
  )
}
